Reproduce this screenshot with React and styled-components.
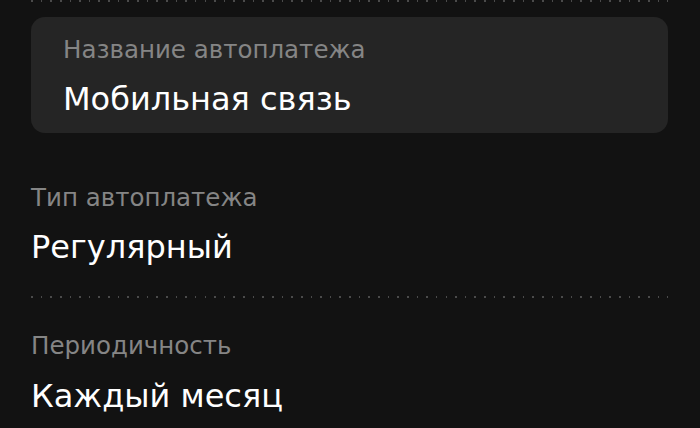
import React from "react";
import styled, { createGlobalStyle } from "styled-components";

const GlobalStyle = createGlobalStyle`
  html, body {
    margin: 0;
    padding: 0;
    background: #121212;
  }
  body {
    font-family: "DejaVu Sans", "Noto Sans", sans-serif;
    -webkit-font-smoothing: antialiased;
  }
`;

const Screen = styled.div`
  display: flex;
  flex-direction: column;
  padding: 0 32px 0 31px;
  min-height: 428px;
  box-sizing: border-box;
  background: #121212;
  overflow: hidden;
`;

/* dotted separator line */
const Dots = styled.div`
  height: 2px;
  flex-shrink: 0;
  background-image: repeating-linear-gradient(
    to right,
    #4b4b4b 0 1.6px,
    transparent 1.6px 9.64px
  );
  margin: ${({ $spacing }) => $spacing || "0"};
`;

const Card = styled.div`
  background: #252525;
  border-radius: 14px;
  margin-top: 15px;
  height: 116px;
  box-sizing: border-box;
  padding: 17.5px 32px 0;
  display: flex;
  flex-direction: column;
`;

const Field = styled.div`
  display: flex;
  flex-direction: column;
  padding-top: ${({ $top }) => $top || 0}px;
`;

const Label = styled.div`
  color: #858585;
  font-size: 24.5px;
  line-height: 30px;
`;

const Value = styled.div`
  color: #ffffff;
  font-size: 32px;
  line-height: 40px;
  margin-top: 14.4px;
`;

export default function App() {
  return (
    <>
      <GlobalStyle />
      <Screen>
        <Dots />
        <Card>
          <Label>Название автоплатежа</Label>
          <Value>Мобильная связь</Value>
        </Card>
        <Field $top={49.5}>
          <Label>Тип автоплатежа</Label>
          <Value>Регулярный</Value>
        </Field>
        <Dots $spacing="29px 0 0" />
        <Field $top={33.5}>
          <Label>Периодичность</Label>
          <Value>Каждый месяц</Value>
        </Field>
      </Screen>
    </>
  );
}
